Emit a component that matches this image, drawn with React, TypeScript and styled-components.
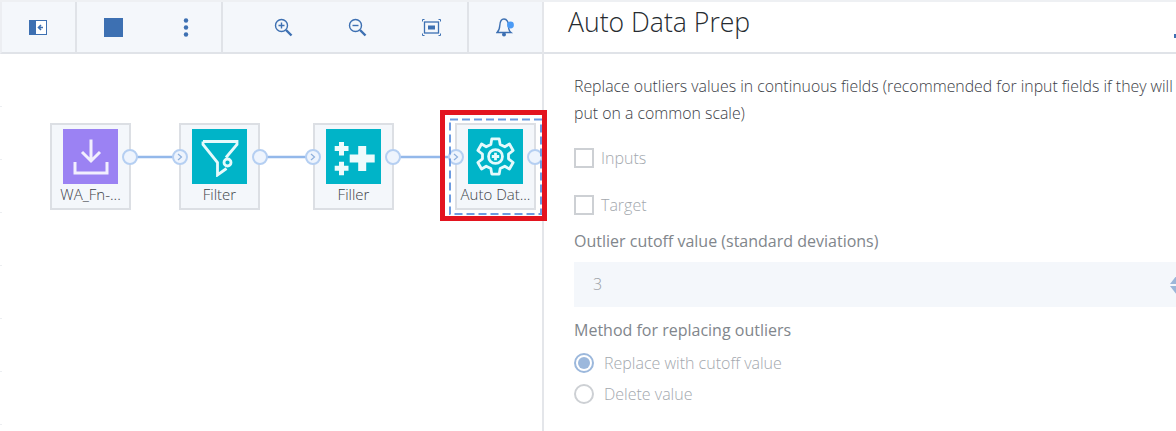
import styled, { createGlobalStyle } from 'styled-components';

const blue = '#3d70b2';
const teal = '#00b4c8';

const GlobalStyle = createGlobalStyle`
  html, body {
    margin: 0;
    padding: 0;
    background: #fff;
    overflow: hidden;
  }
  body {
    font-family: "Open Sans", "Liberation Sans", sans-serif;
  }
`;

const Page = styled.div`
  width: 1176px;
  height: 431px;
  display: flex;
  overflow: hidden;
  border-top: 2px solid #eef0f3;
  box-sizing: border-box;
`;

const LeftColumn = styled.div`
  width: 544px;
  flex: none;
  display: flex;
  flex-direction: column;
  border-right: 2px solid #e4e6ea;
  box-sizing: border-box;
`;

const Toolbar = styled.div`
  height: 52px;
  flex: none;
  display: flex;
  background: #f4f7fb;
  border-bottom: 2px solid #e0e3e8;
  border-left: 2px solid #eceef2;
  box-sizing: border-box;
`;

const ToolGroup = styled.div<{ $width: number; $gap: number; $pad: number; $last?: boolean }>`
  width: ${p => p.$width}px;
  flex: none;
  display: flex;
  align-items: center;
  gap: ${p => p.$gap}px;
  padding-left: ${p => p.$pad}px;
  box-sizing: border-box;
  border-right: ${p => (p.$last ? 'none' : '2px solid #e0e3e8')};
`;

const Canvas = styled.div`
  position: relative;
  flex: 1;
  background: repeating-linear-gradient(to bottom, transparent 0, transparent 52px, #eceef1 52px, #eceef1 53px) 0 0 / 2px 100% no-repeat;
`;

const Links = styled.svg`
  position: absolute;
  left: 0;
  top: 0;
`;

const Node = styled.div<{ $x: number }>`
  position: absolute;
  left: ${p => p.$x}px;
  top: 69px;
  width: 81px;
  height: 87px;
  box-sizing: border-box;
  background: #f4f7fb;
  border: 2px solid #dcdfe4;
  display: flex;
  flex-direction: column;
  align-items: center;
  padding-top: 4px;
`;

const Tile = styled.div<{ $color: string }>`
  width: 55px;
  height: 55px;
  flex: none;
  background: ${p => p.$color};
  display: flex;
  align-items: center;
  justify-content: center;
`;

const NodeLabel = styled.div`
  margin-top: 1px;
  font-size: 15px;
  line-height: 18px;
  font-weight: 300;
  color: #3d4248;
  white-space: nowrap;
`;

const Selection = styled.div`
  position: absolute;
  left: 440px;
  top: 56px;
  width: 107px;
  height: 111px;
  box-sizing: border-box;
  border: 5px solid #e3141f;
  pointer-events: none;
`;

const Panel = styled.div`
  flex: 1;
  min-width: 0;
  display: flex;
  flex-direction: column;
`;

const PanelHeader = styled.div`
  height: 52px;
  flex: none;
  box-sizing: border-box;
  border-bottom: 2px solid #e0e3e8;
  padding: 2px 0 0 24px;
  display: flex;
  justify-content: space-between;
  overflow: hidden;
`;

const Title = styled.h1`
  margin: 0;
  font-size: 26.6px;
  line-height: 36px;
  font-weight: 300;
  color: #262b30;
`;

const CloseMark = styled.svg`
  margin-top: 30px;
  flex: none;
`;

const PanelBody = styled.div`
  padding: 19px 0 0 30px;
  display: flex;
  flex-direction: column;
`;

const Intro = styled.p`
  margin: 0;
  font-size: 15.85px;
  line-height: 27px;
  font-weight: 300;
  color: #3b4046;
  white-space: nowrap;
`;

const CheckRow = styled.div<{ $top: number }>`
  display: flex;
  align-items: center;
  gap: 7px;
  margin-top: ${p => p.$top}px;
  height: 22px;
`;

const Box = styled.span`
  width: 20px;
  height: 20px;
  flex: none;
  box-sizing: border-box;
  border: 2px solid #cdd0d4;
`;

const Muted = styled.span`
  font-size: 16px;
  font-weight: 300;
  color: #a3a8ae;
`;

const FieldLabel = styled.div<{ $top: number }>`
  margin-top: ${p => p.$top}px;
  font-size: 16px;
  line-height: 18px;
  font-weight: 500;
  color: #81868c;
`;

const NumberField = styled.div`
  margin-top: 12px;
  height: 45px;
  display: flex;
  align-items: center;
  justify-content: space-between;
  background: #f4f7fb;
  padding-left: 19px;
  overflow: hidden;
`;

const FieldValue = styled.span`
  font-size: 16px;
  font-weight: 300;
  color: #9a9fa5;
  padding-bottom: 2px;
`;

const Stepper = styled.span`
  display: flex;
  flex-direction: column;
  gap: 2px;
  margin-right: -8px;
`;

const Arrow = styled.span<{ $down?: boolean }>`
  width: 0;
  height: 0;
  border-left: 7px solid transparent;
  border-right: 7px solid transparent;
  ${p => (p.$down ? 'border-top' : 'border-bottom')}: 9px solid #9cb6d8;
`;

const RadioRow = styled.div<{ $top: number }>`
  display: flex;
  align-items: center;
  gap: 10px;
  margin-top: ${p => p.$top}px;
  height: 22px;
`;

const Radio = styled.span<{ $on?: boolean }>`
  width: 20px;
  height: 20px;
  flex: none;
  box-sizing: border-box;
  border-radius: 50%;
  border: 2px solid ${p => (p.$on ? '#9cb8dc' : '#cdd0d4')};
  display: flex;
  align-items: center;
  justify-content: center;
  &::after {
    content: '';
    display: ${p => (p.$on ? 'block' : 'none')};
    width: 12px;
    height: 12px;
    border-radius: 50%;
    background: #9cb8dc;
  }
`;

const ports = [130, 260, 393, 535];
const inputs = [180, 313, 456];

function Port({ x, input }: { x: number; input?: boolean }) {
  return (
    <g>
      <circle cx={x} cy={103} r={7} fill="#eef4fd" stroke="#b5cff2" strokeWidth={2} />
      {input && <path d={`M${x - 2} 100l3.5 3-3.5 3`} fill="none" stroke="#8fb0dc" strokeWidth={1.2} />}
    </g>
  );
}

export default function App() {
  return (
    <Page>
      <GlobalStyle />
      <LeftColumn>
        <Toolbar>
          <ToolGroup $width={75} $gap={0} $pad={27}>
            <svg width="18" height="15" viewBox="0 0 18 15">
              <rect x="0.5" y="0.5" width="17" height="14" fill="#fff" stroke={blue} />
              <rect x="0" y="0" width="7" height="15" fill={blue} />
              <path d="M14 7.5h-4M12 5l-2.5 2.5L12 10" fill="none" stroke={blue} strokeWidth="1.6" />
            </svg>
          </ToolGroup>
          <ToolGroup $width={146} $gap={60} $pad={27}>
            <svg width="19" height="19" viewBox="0 0 19 19">
              <rect width="19" height="19" fill={blue} />
            </svg>
            <svg width="6" height="19" viewBox="0 0 6 19">
              <circle cx="3" cy="2.5" r="2.2" fill={blue} />
              <circle cx="3" cy="9.5" r="2.2" fill={blue} />
              <circle cx="3" cy="16.5" r="2.2" fill={blue} />
            </svg>
          </ToolGroup>
          <ToolGroup $width={246} $gap={55} $pad={51}>
            <svg width="19" height="19" viewBox="0 0 19 19" fill="none" stroke={blue}>
              <circle cx="7.5" cy="7.5" r="6" strokeWidth="1.4" />
              <path d="M7.5 4.5v6M4.5 7.5h6" strokeWidth="1.4" />
              <path d="M12 12l5.5 5.5" strokeWidth="2.4" />
            </svg>
            <svg width="19" height="19" viewBox="0 0 19 19" fill="none" stroke={blue}>
              <circle cx="7.5" cy="7.5" r="6" strokeWidth="1.4" />
              <path d="M4.5 7.5h6" strokeWidth="1.4" />
              <path d="M12 12l5.5 5.5" strokeWidth="2.4" />
            </svg>
            <svg width="19" height="17" viewBox="0 0 19 17" fill="none" stroke={blue}>
              <rect x="2.5" y="3" width="14" height="11" strokeWidth="1.3" />
              <rect x="6" y="6.5" width="7" height="4" fill={blue} stroke="none" />
              <path d="M0.5 2.5v-2h2M16.5 0.5h2v2M18.5 14.5v2h-2M2.5 16.5h-2v-2" strokeWidth="1" />
            </svg>
          </ToolGroup>
          <ToolGroup $width={74} $gap={0} $pad={27} $last>
            <svg width="19" height="20" viewBox="0 0 19 20" fill="none" stroke={blue}>
              <path d="M1 15.5h14c-2-1.500-2.500-3-2.500-7 0-3-1.500-6.500-4.500-6.500S4 5 3.800 8.500c-.2 3.500-1 5.500-2.800 7z" strokeWidth="1.4" />
              <circle cx="8" cy="17.500" r="2" fill={blue} stroke="none" />
              <circle cx="14.500" cy="8" r="3.400" fill="#4b9bf5" stroke="none" />
            </svg>
          </ToolGroup>
        </Toolbar>
        <Canvas>
          <Links width="542" height="377">
            <path d="M137 103h36M267 103h39M400 103h49" stroke="#93b8ea" strokeWidth="2.5" fill="none" />
          </Links>
          <Node $x={50}>
            <Tile $color="#9b82f3">
              <svg width="36" height="38" viewBox="0 0 36 38" fill="none" stroke="#f2effe" strokeWidth="3">
                <path d="M18 1.500V23M9 14l9 9 9-9" />
                <path d="M2 24v11h32V24" />
              </svg>
            </Tile>
            <NodeLabel>WA_Fn-...</NodeLabel>
          </Node>
          <Node $x={179}>
            <Tile $color={teal}>
              <svg width="38" height="40" viewBox="0 0 38 40" fill="none" stroke="#e6fafc" strokeWidth="2.800">
                <path d="M2 4.500h34v3L25 20.500M2 4.500v3l14.500 18V38l9-6.500" />
                <circle cx="26.500" cy="25.500" r="3.500" />
              </svg>
            </Tile>
            <NodeLabel>Filter</NodeLabel>
          </Node>
          <Node $x={313}>
            <Tile $color={teal}>
              <svg width="42" height="42" viewBox="0 0 42 42" fill="#eefbfc">
                <path d="M6 6h5v4h4.500v5H11v4.500H6V15H1.700v-5H6z" />
                <path d="M6 25.700h5v4h4.500v5H11v4.500H6v-4.500H1.700v-5H6z" />
                <path d="M25.200 10h8v8.500h8.500v8h-8.500V35h-8v-8.500h-8.500v-8h8.500z" />
              </svg>
            </Tile>
            <NodeLabel>Filler</NodeLabel>
          </Node>
          <Node $x={455}>
            <Tile $color={teal}>
              <svg width="39" height="39" viewBox="0 0 42 42" fill="none" stroke="#e6fafc" strokeWidth="3">
                <path d="M17 2h8l1 6 5 2.500 5-3 4 7-5 4v5l5 4-4 7-5-3-5 2.500-1 6h-8l-1-6-5-2.500-5 3-4-7 5-4v-5l-5-4 4-7 5 3 5-2.500z" strokeLinejoin="round" />
                <circle cx="21" cy="21" r="7.500" />
                <path d="M21 17v8M17 21h8" />
              </svg>
            </Tile>
            <NodeLabel>Auto Dat...</NodeLabel>
          </Node>
          <Links width="542" height="377">
            {ports.map(x => <Port key={x} x={x} />)}
            {inputs.map(x => <Port key={x} x={x} input />)}
            <rect x="450" y="65.500" width="91" height="94.500" fill="none" stroke="#6d9be0" strokeWidth="2" strokeDasharray="8 4" />
          </Links>
          <Selection />
        </Canvas>
      </LeftColumn>
      <Panel>
        <PanelHeader>
          <Title>Auto Data Prep</Title>
          <CloseMark width="2" height="5" viewBox="0 0 2 5">
            <rect x="0" y="0" width="2" height="4" fill={blue} />
          </CloseMark>
        </PanelHeader>
        <PanelBody>
          <Intro>
            Replace outliers values in continuous fields (recommended for input fields if they will
            <br />
            put on a common scale)
          </Intro>
          <CheckRow $top={20}>
            <Box />
            <Muted>Inputs</Muted>
          </CheckRow>
          <CheckRow $top={25}>
            <Box />
            <Muted>Target</Muted>
          </CheckRow>
          <FieldLabel $top={16}>Outlier cutoff value (standard deviations)</FieldLabel>
          <NumberField>
            <FieldValue>3</FieldValue>
            <Stepper>
              <Arrow />
              <Arrow $down />
            </Stepper>
          </NumberField>
          <FieldLabel $top={14}>Method for replacing outliers</FieldLabel>
          <RadioRow $top={13}>
            <Radio $on />
            <Muted>Replace with cutoff value</Muted>
          </RadioRow>
          <RadioRow $top={9}>
            <Radio />
            <Muted>Delete value</Muted>
          </RadioRow>
        </PanelBody>
      </Panel>
    </Page>
  );
}
